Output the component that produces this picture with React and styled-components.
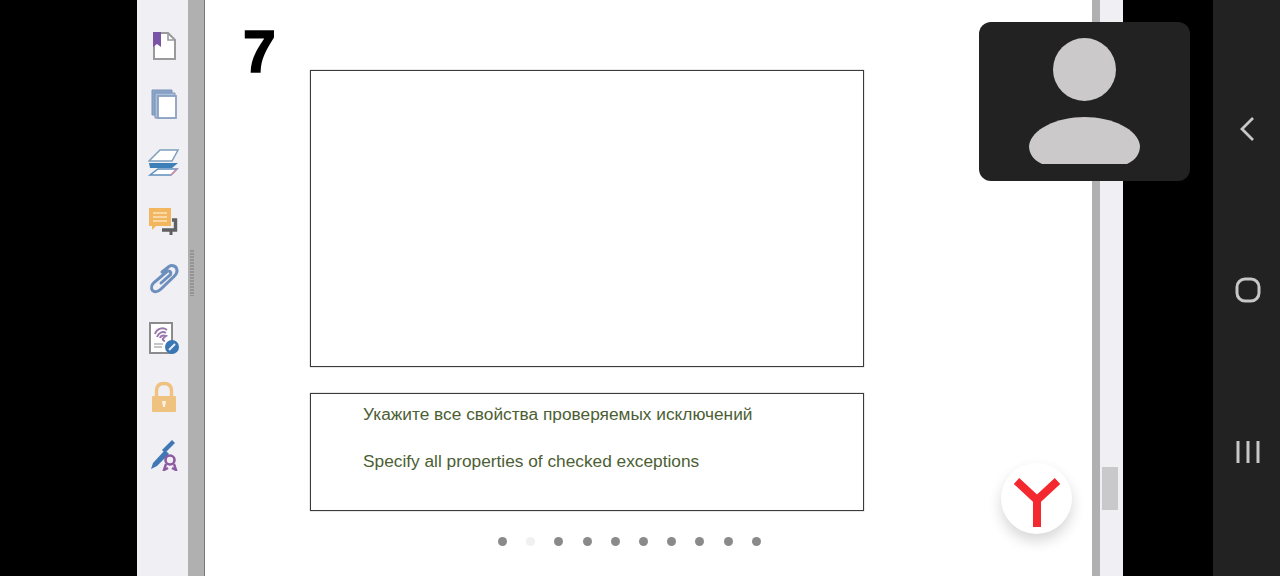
import React from 'react';
import styled, { createGlobalStyle } from 'styled-components';

const Global = createGlobalStyle`
html, body {
  margin: 0;
  padding: 0;
  background: #000;
  overflow: hidden;
}
`;

const Screen = styled.div`
position: relative;
display: flex;
width: 1280px;
height: 576px;
background: #000;
font-family: "Liberation Sans", Arial, sans-serif;
overflow: hidden;
`;

const Gutter = styled.div`
flex: 0 0 ${(p) => p.$width}px;
background: #000;
`;

const Sidebar = styled.div`
flex: 0 0 51px;
box-sizing: border-box;
padding-top: 29px;
background: #f0eff4;
display: grid;
grid-auto-rows: 58.6px;
justify-items: center;
align-content: start;
`;

const IconSlot = styled.div`
width: 32px;
height: 32px;
margin-left: 3px;
filter: blur(0.5px);
svg { display: block; }
`;

const Splitter = styled.div`
flex: 0 0 16px;
box-sizing: border-box;
padding: 250px 0 0 2px;
background: #b0b0b0;
`;

const Grip = styled.div`
width: 4px;
height: 46px;
background-image: radial-gradient(circle at 1px 1px, #858585 0.6px, transparent 0.9px);
background-size: 2px 3px;
`;

const Page = styled.div`
flex: 0 0 888px;
box-sizing: border-box;
border-left: 1px solid #777;
background: #fff;
display: grid;
grid-template-columns: 105px 554px;
align-content: start;
`;

const Number = styled.div`
padding: 17px 0 0 38px;
font-size: 59px;
line-height: 70px;
font-weight: 700;
color: #000;
-webkit-text-stroke: 1.5px #000;
`;

const Content = styled.div`
padding-top: 70px;
`;

const FigureBox = styled.div`
box-sizing: border-box;
height: 297px;
border: 1px solid #3a3a3a;
box-shadow: 0 0 1px rgba(0, 0, 0, 0.5);
background: #fff;
`;

const CaptionBox = styled.div`
box-sizing: border-box;
height: 118px;
margin-top: 26px;
padding: 10px 0 0 52px;
border: 1px solid #3a3a3a;
box-shadow: 0 0 1px rgba(0, 0, 0, 0.5);
display: flex;
flex-direction: column;
gap: 27px;
`;

const Caption = styled.div`
font-size: 17.3px;
line-height: 20px;
color: #4c5e33;
white-space: nowrap;
`;

const Dots = styled.div`
display: flex;
gap: 19.2px;
margin-top: 26px;
padding-left: 188px;
`;

const Dot = styled.span`
width: 9px;
height: 9px;
border-radius: 50%;
background: ${(p) => (p.$active ? '#f0f0f0' : '#8a8a8a')};
`;

const ThinBar = styled.div`
flex: 0 0 8px;
background: #b0b0b0;
`;

const Scrollbar = styled.div`
flex: 0 0 23px;
box-sizing: border-box;
padding: 467px 5px 0 2px;
background: #f0eff4;
`;

const Thumb = styled.div`
height: 43px;
background: #c9c9cb;
`;

const NavBar = styled.div`
flex: 0 0 67px;
box-sizing: border-box;
padding: 48px 0 0 3px;
background: #222;
display: grid;
grid-auto-rows: 161.5px;
justify-items: center;
align-items: center;
align-content: start;
`;

const VideoCard = styled.div`
position: absolute;
left: 979px;
top: 22px;
width: 211px;
height: 159px;
border-radius: 12px;
background: #222;
display: flex;
justify-content: center;
padding-top: 16px;
box-sizing: border-box;
`;

const BrowserButton = styled.div`
position: absolute;
left: 1001px;
top: 463px;
width: 71px;
height: 71px;
border-radius: 50%;
background: #fff;
box-shadow: 0 7px 14px rgba(0, 0, 0, 0.16);
display: flex;
align-items: center;
justify-content: center;
`;

const BookmarkIcon = () => (
  <svg width="32" height="32" viewBox="0 0 32 32">
    <path d="M6 4H20L27 11V30H6Z" fill="#fff" stroke="#9a9a9c" strokeWidth="2" />
    <path d="M20 4V11H27" fill="none" stroke="#9a9a9c" strokeWidth="1.6" />
    <path d="M5 3H13V18L9 15L5 18Z" fill="#7a55a5" />
  </svg>
);

const PagesIcon = () => (
  <svg width="32" height="32" viewBox="0 0 32 32">
    <path d="M4 2H24V27H4Z" fill="#8ba6cb" stroke="#7d93b5" />
    <path d="M7 5H27V30H7Z" fill="#a9c0de" stroke="#7d93b5" />
    <rect x="10" y="8" width="18" height="22" fill="#fff" stroke="#8ba0bf" strokeWidth="1.8" />
  </svg>
);

const LayersIcon = () => (
  <svg width="32" height="32" viewBox="0 0 32 32">
    <path d="M2 29L10 23H29L23 29Z" fill="#fff" stroke="#5f8fbd" strokeWidth="1.5" />
    <path d="M23 29L29 23" stroke="#d98a9a" strokeWidth="1.4" />
    <path d="M1 17H30L24 22H2Z" fill="#3f7fb8" />
    <path d="M1 15L12 4H30L24 15Z" fill="#fff" stroke="#7f9fbd" strokeWidth="1.5" />
  </svg>
);

const CommentsIcon = () => (
  <svg width="32" height="32" viewBox="0 0 32 32">
    <path d="M24 15H27.5V25H14" fill="none" stroke="#5f6062" strokeWidth="3.4" />
    <path d="M23 26V30" stroke="#5f6062" strokeWidth="3" />
    <path d="M1 3H23V21H8L4 25V21H1Z" fill="#f2b65f" />
    <path d="M5 8H19M5 12H19M5 16H19" stroke="#fbe3bd" strokeWidth="1.6" />
  </svg>
);

const ClipIcon = () => (
  <svg width="32" height="32" viewBox="0 0 32 32">
    <path
      d="M14 9L21 3.5C24 1.5 28.5 3 29 7C29.5 10 28 11.5 26 13.5L13 26C10 29 6.5 29.5 4.5 27.5C2.5 25 4 21.5 6 19.5L19 8.5C21 7 23.5 9 22.5 11.5L13 20"
      fill="none"
      stroke="#6d8fbd"
      strokeWidth="3"
      strokeLinecap="round"
    />
  </svg>
);

const SignedDocIcon = () => (
  <svg width="32" height="32" viewBox="0 0 32 32">
    <rect x="2" y="1" width="22" height="30" fill="#fff" stroke="#8c8c8e" strokeWidth="2" />
    <path d="M7 12C9 6 15 5 19 8M9 15C11 10 15 9 18 11M12 16C13 13 15 13 18 14C15 16 13 18 17 19" fill="none" stroke="#9a78ac" strokeWidth="2" />
    <path d="M6 22H15M6 25H14" stroke="#b4b4b6" strokeWidth="1.4" />
    <circle cx="24" cy="25" r="7" fill="#3a76b4" />
    <path d="M21 28L27 22" stroke="#e8eef6" strokeWidth="2" />
  </svg>
);

const LockIcon = () => (
  <svg width="32" height="32" viewBox="0 0 32 32">
    <path d="M8.5 15V10C8.5 5 11 2.5 16 2.5C21 2.5 23.5 5 23.5 10V15" fill="none" stroke="#efc27f" strokeWidth="3.4" />
    <rect x="4" y="15" width="24" height="16" rx="1" fill="#efc27f" />
    <path d="M14 20H18L17 26H15Z" fill="#fbf1df" />
  </svg>
);

const PenAwardIcon = () => (
  <svg width="32" height="32" viewBox="0 0 32 32">
    <path d="M3 30L5 24L17 11L21 15L9 27Z" fill="#3f78b4" />
    <path d="M14 11L24 1L27 4L17 14Z" fill="#3f78b4" />
    <circle cx="22" cy="21" r="4.5" fill="none" stroke="#8c5aa0" strokeWidth="2.6" />
    <path d="M18 25L16 31L20 29M26 25L28 31L24 29" fill="none" stroke="#8c5aa0" strokeWidth="2.4" />
  </svg>
);

const sidebarIcons = [
  BookmarkIcon,
  PagesIcon,
  LayersIcon,
  CommentsIcon,
  ClipIcon,
  SignedDocIcon,
  LockIcon,
  PenAwardIcon,
];

const dots = [false, true, false, false, false, false, false, false, false, false];

const App = () => (
  <Screen>
    <Global />
    <Gutter $width={137} />
    <Sidebar>
      {sidebarIcons.map((Icon, i) => (
        <IconSlot key={i}>
          <Icon />
        </IconSlot>
      ))}
    </Sidebar>
    <Splitter>
      <Grip />
    </Splitter>
    <Page>
      <Number>7</Number>
      <Content>
        <FigureBox />
        <CaptionBox>
          <Caption>Укажите все свойства проверяемых исключений</Caption>
          <Caption>Specify all properties of checked exceptions</Caption>
        </CaptionBox>
        <Dots>
          {dots.map((active, i) => (
            <Dot key={i} $active={active} />
          ))}
        </Dots>
      </Content>
    </Page>
    <ThinBar />
    <Scrollbar>
      <Thumb />
    </Scrollbar>
    <Gutter $width={90} />
    <NavBar>
      <svg width="32" height="32" viewBox="0 0 32 32">
        <path d="M21 5L10 16L21 27" fill="none" stroke="#c8c6c6" strokeWidth="2.8" />
      </svg>
      <svg width="32" height="32" viewBox="0 0 32 32">
        <rect x="5" y="5" width="22" height="22" rx="8" fill="none" stroke="#c8c6c6" strokeWidth="3" />
      </svg>
      <svg width="32" height="32" viewBox="0 0 32 32">
        <path d="M6 5V27M16 5V27M26 5V27" fill="none" stroke="#c8c6c6" strokeWidth="3" />
      </svg>
    </NavBar>
    <VideoCard>
      <svg width="112" height="126" viewBox="0 0 112 126">
        <circle cx="55.5" cy="31.5" r="31.5" fill="#cbc9c9" />
        <path d="M13 126C4 122 0 115 0 108C2 91 28 79 55.5 79C83 79 109 91 111 108C111 115 107 122 98 126Z" fill="#cbc9c9" />
      </svg>
    </VideoCard>
    <BrowserButton>
      <svg width="50" height="56" viewBox="0 0 50 56">
        <path d="M4.5 10L25 29L45.5 10M25 28V56" fill="none" stroke="#f4282f" strokeWidth="8" />
      </svg>
    </BrowserButton>
  </Screen>
);

export default App;
